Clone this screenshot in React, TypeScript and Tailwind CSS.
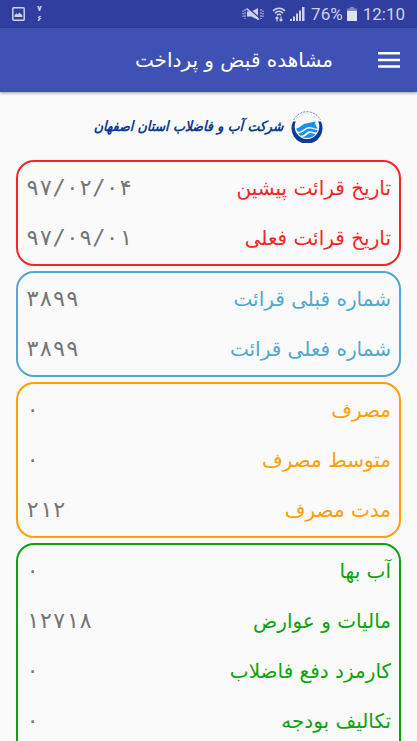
import React from "react";

type Row = { label: string; value: string };
type Section = { id: string; tone: string; rows: Row[] };

const sections: Section[] = [
  {
    id: "dates",
    tone: "border-[#f42525] text-[#f42525]",
    rows: [
      { label: "تاریخ قرائت پیشین", value: "۹۷/۰۲/۰۴" },
      { label: "تاریخ قرائت فعلی", value: "۹۷/۰۹/۰۱" },
    ],
  },
  {
    id: "readings",
    tone: "border-[#50a8d0] text-[#50a8d0]",
    rows: [
      { label: "شماره قبلی قرائت", value: "۳۸۹۹" },
      { label: "شماره فعلی قرائت", value: "۳۸۹۹" },
    ],
  },
  {
    id: "usage",
    tone: "border-[#ff9f05] text-[#ff9f05]",
    rows: [
      { label: "مصرف", value: "۰" },
      { label: "متوسط مصرف", value: "۰" },
      { label: "مدت مصرف", value: "۲۱۲" },
    ],
  },
  {
    id: "charges",
    tone: "border-[#0ea30e] text-[#0ea30e] pb-6",
    rows: [
      { label: "آب بها", value: "۰" },
      { label: "مالیات و عوارض", value: "۱۲۷۱۸" },
      { label: "کارمزد دفع فاضلاب", value: "۰" },
      { label: "تکالیف بودجه", value: "۰" },
    ],
  },
];

function StatusBar() {
  return (
    <div
      dir="ltr"
      className="flex h-7 items-center justify-between bg-[#303f9f] px-3 font-['Roboto',sans-serif] text-[17px] leading-7 text-[#cdd1ea]"
    >
      <div className="flex items-center gap-3">
        <svg width="13" height="14" viewBox="0 0 13 14" aria-hidden="true">
          <rect x="0.8" y="0.8" width="11.4" height="12.4" rx="1" fill="none" stroke="currentColor" strokeWidth="1.5" />
          <path d="M2.5 10V8.200l2-2 1.300 1.200 1.600-1.800 1.400 1.300 1.500 1.200V10z" fill="currentColor" />
        </svg>
        <div className="flex flex-col text-center font-['DejaVu_Sans',sans-serif] text-[8px] font-bold leading-[10px]">
          <span>۷</span>
          <span>۶</span>
        </div>
      </div>
      <div className="flex items-center gap-1">
        <svg width="22" height="14" viewBox="0 0 22 14" fill="none" stroke="currentColor" aria-hidden="true">
          <path d="M5 4.500h4.500L16 1v12L9.500 9.500H5z" fill="currentColor" stroke="none" />
          <path d="M5.500 0.500L18 11.500" stroke="#303f9f" strokeWidth="1.4" />
          <path d="M4.500 1.500L17 12.500" strokeWidth="1.6" />
          <path d="M3 2v10M19 2v10" strokeDasharray="2 1" />
          <path d="M1 3.500v7M21 3.500v7" strokeDasharray="1.500 1" />
        </svg>
        <svg className="ml-1" width="14" height="15" viewBox="0 0 14 15" fill="none" stroke="currentColor" aria-hidden="true">
          <path d="M1 4C4 .2 10 .2 13 4M3 6.200c2-2.500 6-2.500 8 0M5 8.200c1-1.300 3-1.300 4 0" strokeWidth="1.5" />
          <path d="M5 14.500V9.500M3.500 11.500L5 10l1.500 1.500M9 9.500v5M7.500 12.500L9 14l1.500-1.500" strokeWidth="1.200" />
        </svg>
        <svg width="15" height="14" viewBox="0 0 15 14" fill="currentColor" aria-hidden="true">
          <path d="M0 12h2v2H0zM3 9.500h2V14H3zM6 6.500h2V14H6zM9 3.500h2V14H9zM12 0h2.500v14H12z" />
        </svg>
        <span className="pl-0.5">76%</span>
        <svg width="10" height="14" viewBox="0 0 10 14" aria-hidden="true">
          <path d="M3 0h4v1.500h3V4H0V1.500h3z" fill="#7f88c4" />
          <path d="M0 4h10v10H0z" fill="#dfe2f3" />
        </svg>
        <span className="pl-0.5">12:10</span>
      </div>
    </div>
  );
}

function Brand() {
  return (
    <div className="flex items-center justify-center gap-2 py-4 text-[#0b3b92]">
      <svg width="32" height="34" viewBox="0 0 32 34" aria-hidden="true">
        <path d="M2.600 11A15 15 0 0 1 29.400 11" fill="none" stroke="#5f7fae" strokeWidth="1" strokeDasharray="2 1.200" />
        <path d="M4.600 11.500A13 13 0 0 1 27.400 11.500" fill="none" stroke="#b4c4da" strokeWidth="0.800" strokeDasharray="1 2" />
        <path d="M2 12.500L4.800 12.500A12.300 12.300 0 1 0 27.200 12.500L30 12.500A15.500 15.500 0 1 1 2 12.500z" fill="#0b3b92" />
        <path d="M5 19.500C8 20 11 15 15 14.500 18 13.500 21 13.500 24.500 12.500 23.500 15 25 17.500 27 19.500 23 20 21 17.500 18 18 13 18.500 11 23.500 6.500 22.500z" fill="#1592ed" />
        <path d="M7 24.200C12 24.500 14 19.800 18.500 19.500 21.500 19.300 23.500 21 26.500 21L25.500 23.500C22.500 23.500 21 22 18.500 22.300 15 22.600 13.500 27 9.500 26.800z" fill="#1592ed" />
        <path d="M11 28C15 28 16.500 24.200 19.500 24 21.500 24 22.500 25 24.500 25 22 28.500 16.500 30.500 11 28z" fill="#1592ed" />
      </svg>
      <h2 className="font-['DejaVu_Sans_Condensed','DejaVu_Sans',sans-serif] text-[14px] font-bold italic leading-9">
        شرکت آب و فاضلاب استان اصفهان
      </h2>
    </div>
  );
}

function Card({ section }: { section: Section }) {
  return (
    <dl className={`rounded-[18px] border-2 px-2 py-px ${section.tone}`}>
      {section.rows.map((row) => (
        <div key={row.label} className="flex h-[50px] items-center justify-between">
          <dt className="text-[20px] leading-8">{row.label}</dt>
          <dd
            dir="ltr"
            className="font-['DejaVu_Sans_Mono','DejaVu_Sans',monospace] text-[22px] leading-8 text-[#757575]"
          >
            {row.value}
          </dd>
        </div>
      ))}
    </dl>
  );
}

export default function App() {
  return (
    <div
      dir="rtl"
      lang="fa"
      className="flex h-screen flex-col overflow-hidden bg-[#fafafa] font-['DejaVu_Sans',sans-serif]"
    >
      <StatusBar />
      <header className="z-10 flex h-16 shrink-0 items-center gap-11 bg-[#3f51b5] px-4 text-white shadow-[0_1px_3px_rgba(0,0,0,0.4)]">
        <button type="button" aria-label="منو" className="flex h-6 w-6 items-center justify-center">
          <svg width="22" height="16" viewBox="0 0 22 16" fill="currentColor" aria-hidden="true">
            <path d="M0 0h22v2.500H0zM0 6.700h22v2.500H0zM0 13.300h22v2.500H0z" />
          </svg>
        </button>
        <h1 className="text-[20px] font-normal leading-8">مشاهده قبض و پرداخت</h1>
      </header>
      <main className="px-4">
        <Brand />
        <div className="flex flex-col gap-[5px]">
          {sections.map((section) => (
            <Card key={section.id} section={section} />
          ))}
        </div>
      </main>
    </div>
  );
}
